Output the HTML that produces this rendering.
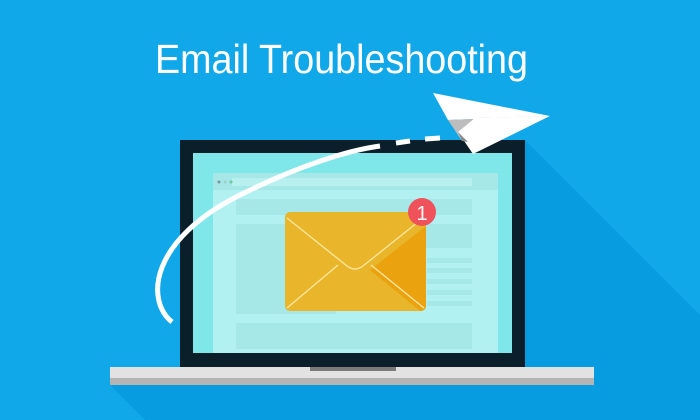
<!DOCTYPE html>
<html><head><meta charset="utf-8"><style>html,body{margin:0;padding:0;width:700px;height:420px;overflow:hidden;background:#11a8ea}</style></head>
<body>
<svg width="700" height="420" viewBox="0 0 700 420" xmlns="http://www.w3.org/2000/svg">
<rect width="700" height="420" fill="#11a8ea"/>
<polygon points="525,140 700,315 700,420 145,420 110,385 525,385" fill="#079be0"/>
<text x="155" y="73" font-family="Liberation Sans, sans-serif" font-size="41" fill="#fff" textLength="373" lengthAdjust="spacingAndGlyphs">Email Troubleshooting</text>
<!-- laptop -->
<rect x="180" y="140" width="345" height="227" fill="#0b1f2b"/>
<rect x="193" y="153" width="319" height="200" fill="#7fe6ea"/>
<rect x="213" y="173" width="285" height="180" fill="#b2f1f1"/>
<rect x="213" y="173" width="285" height="17" fill="#a6e7e8"/>
<rect x="232" y="178" width="240" height="8" fill="#b8f0f0"/>
<circle cx="219" cy="182" r="1.5" fill="#7a9aa0"/><circle cx="225" cy="182" r="1.5" fill="#9ccfc8"/><circle cx="231" cy="182" r="1.5" fill="#6cc8a0"/>
<rect x="236" y="199" width="236" height="16" fill="#a6e7e8"/>
<rect x="236" y="224" width="236" height="24" fill="#a6e7e8"/>
<rect x="236" y="224" width="100" height="90" fill="#a6e7e8"/>
<rect x="427" y="258" width="45" height="5" fill="#a6e7e8"/>
<rect x="427" y="268" width="45" height="5" fill="#a6e7e8"/>
<rect x="427" y="279" width="45" height="5" fill="#a6e7e8"/>
<rect x="427" y="290" width="45" height="5" fill="#a6e7e8"/>
<rect x="427" y="301" width="45" height="5" fill="#a6e7e8"/>
<rect x="236" y="323" width="236" height="26" fill="#a6e7e8"/>
<rect x="110" y="367" width="484" height="11" fill="#e2e2e2"/>
<rect x="110" y="378" width="484" height="7" fill="#b4b4b4"/>
<rect x="310" y="367" width="86" height="4" fill="#7a7a7a"/>
<!-- envelope -->
<rect x="285" y="212" width="141" height="99" rx="5" fill="#e9b62b"/>
<path d="M426 226 L426 305 Q426 311 420 311 L370 270 Z" fill="#eaa20f"/>
<path d="M287 218 L347 266 Q355 272 363 266 L423 218" stroke="#fbe7a0" stroke-width="1.3" fill="none"/>
<path d="M287 308 L338 265 M424 308 L371 265" stroke="#fbe7a0" stroke-width="1.3" fill="none"/>
<circle cx="422" cy="212" r="14" fill="#f0525b"/>
<text x="422" y="220" font-family="Liberation Sans, sans-serif" font-size="20" fill="#fff" text-anchor="middle">1</text>
<!-- trail -->
<path d="M172 322 C145 300 150 240 240 195 C300 165 350 150 380 146" stroke="#fff" stroke-width="5" fill="none"/>
<path d="M396 143 L410 141 M425 139 L440 138" stroke="#fff" stroke-width="5" fill="none"/>
<!-- plane -->
<polygon points="433,93 550,116 448,120" fill="#fff"/>
<polygon points="448,120 550,116 475,118 462,141" fill="#bdbdbd"/>
<polygon points="475,118 550,116 473,154 458,132" fill="#fff"/>
<polygon points="462,141 458,132 468,142" fill="#8a8a8a"/>
</svg>
</body></html>
